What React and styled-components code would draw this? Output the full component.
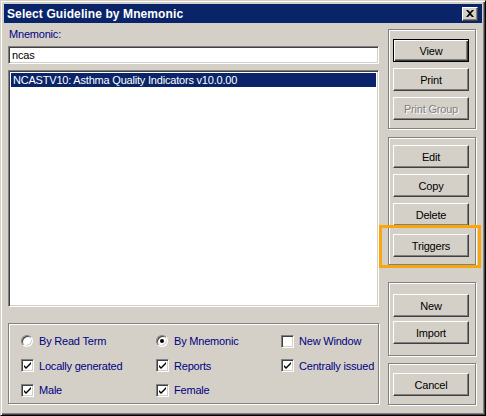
import React from 'react';
import styled, { createGlobalStyle } from 'styled-components';

// --- Data ---
const rightGroups = [
  { top: 1, height: 100, padTop: 9, gap: 6, buttons: [
    { label: 'View', isDefault: true },
    { label: 'Print' },
    { label: 'Print Group', disabled: true },
  ] },
  { top: 8, height: 128, padTop: 7, gap: 6, buttons: [
    { label: 'Edit' },
    { label: 'Copy' },
    { label: 'Delete' },
    { label: 'Triggers', extra: 2 },
  ] },
  { top: 17, height: 74, padTop: 11, gap: 4, buttons: [
    { label: 'New' },
    { label: 'Import' },
  ] },
  { top: 7, height: 42, padTop: 9, gap: 0, buttons: [
    { label: 'Cancel' },
  ] },
];

const options = [
  { type: 'radio', label: 'By Read Term', checked: false },
  { type: 'radio', label: 'By Mnemonic', checked: true },
  { type: 'check', label: 'New Window', checked: false },
  { type: 'check', label: 'Locally generated', checked: true },
  { type: 'check', label: 'Reports', checked: true },
  { type: 'check', label: 'Centrally issued', checked: true },
  { type: 'check', label: 'Male', checked: true },
  { type: 'check', label: 'Female', checked: true },
];

// --- Styled Components ---
const GlobalStyle = createGlobalStyle`
  html, body {
    margin: 0;
    padding: 0;
    background: #d4d0c8;
  }
  body {
    font-family: "Liberation Sans", Tahoma, Arial, sans-serif;
    font-size: 11px;
    letter-spacing: -0.2px;
    color: #000;
  }
`;

const Window = styled.div`
  position: relative;
  width: 486px;
  height: 416px;
  box-sizing: border-box;
  background: #d4d0c8;
  border: 1px solid;
  border-color: #d4d0c8 #000 #000 #d4d0c8;
  box-shadow: inset 1px 1px 0 #fff, inset -1px -1px 0 #404040, inset -2px -2px 0 #808080;
  padding: 3px;
  display: flex;
  flex-direction: column;
`;

const TitleBar = styled.div`
  height: 19px;
  background: #0a246a;
  display: flex;
  align-items: center;
  justify-content: space-between;
  padding: 0 4px 0 3px;
`;

const TitleText = styled.span`
  color: #fff;
  font-weight: bold;
  font-size: 12px;
  letter-spacing: 0.1px;
`;

const CloseButton = styled.div`
  width: 16px;
  height: 14px;
  box-sizing: border-box;
  background: #d4d0c8;
  border: 1px solid;
  border-color: #fff #404040 #404040 #fff;
  box-shadow: inset -1px -1px 0 #808080;
  display: flex;
  align-items: center;
  justify-content: center;
`;

const Body = styled.div`
  display: flex;
  gap: 9px;
  padding: 5px 6px 0 4px;
`;

const LeftColumn = styled.div`
  width: 371px;
  display: flex;
  flex-direction: column;
`;

const FieldLabel = styled.div`
  color: #000080;
  height: 13px;
  line-height: 13px;
  padding-left: 1px;
  margin-bottom: 5px;
`;

const sunken = `
  box-sizing: border-box;
  background: #fff;
  border: 1px solid;
  border-color: #808080 #fff #fff #808080;
  box-shadow: inset 1px 1px 0 #404040, inset -1px -1px 0 #d4d0c8;
`;

const TextInput = styled.div`
  ${sunken}
  height: 18px;
  line-height: 16px;
  padding: 0 3px;
  margin-bottom: 6px;
`;

const ListBox = styled.div`
  ${sunken}
  height: 237px;
  padding: 2px;
  margin-bottom: 16px;
`;

const ListItem = styled.div`
  height: 14px;
  line-height: 14px;
  padding-left: 2px;
  background: ${(p) => (p.selected ? '#0a246a' : 'transparent')};
  color: ${(p) => (p.selected ? '#fff' : '#000')};
`;

const GroupBox = styled.div`
  box-sizing: border-box;
  border: 1px solid #808080;
  box-shadow: inset 1px 1px 0 #fff, 1px 1px 0 #fff;
`;

const OptionsGroup = styled(GroupBox)`
  height: 81px;
  display: grid;
  grid-template-columns: 135px 125px 1fr;
  grid-auto-rows: 24.5px;
  padding: 5px 0 0 12px;
`;

const Option = styled.div`
  display: flex;
  align-items: center;
  gap: 5px;
  color: #000080;
`;

const CheckBox = styled.span`
  ${sunken}
  width: 13px;
  height: 13px;
  display: flex;
  align-items: center;
  justify-content: center;
`;

const Radio = styled.span`
  ${sunken}
  width: 12px;
  height: 12px;
  border-radius: 50%;
  display: flex;
  align-items: center;
  justify-content: center;
  margin-right: 1px;
`;

const RadioDot = styled.span`
  width: 4px;
  height: 4px;
  border-radius: 50%;
  background: #000;
`;

const RightColumn = styled.div`
  position: relative;
  width: 88px;
  display: flex;
  flex-direction: column;
`;

const ButtonGroup = styled(GroupBox)`
  margin-top: ${(p) => p.$top}px;
  height: ${(p) => p.$height}px;
  padding: ${(p) => p.$padTop}px 0 0 4px;
  display: flex;
  flex-direction: column;
  gap: ${(p) => p.$gap}px;
`;

const Button = styled.div`
  width: 76px;
  height: 23px;
  box-sizing: border-box;
  margin-top: ${(p) => p.$extra || 0}px;
  background: #d4d0c8;
  border: 1px solid;
  border-color: ${(p) => (p.$isDefault ? '#000' : '#fff #404040 #404040 #fff')};
  box-shadow: ${(p) =>
    p.$isDefault
      ? 'inset 1px 1px 0 #fff, inset -1px -1px 0 #404040, inset -2px -2px 0 #808080'
      : 'inset -1px -1px 0 #808080'};
  display: flex;
  align-items: center;
  justify-content: center;
  color: ${(p) => (p.$disabled ? '#808080' : '#000')};
  text-shadow: ${(p) => (p.$disabled ? '1px 1px 0 #fff' : 'none')};
`;

const Highlight = styled.div`
  position: absolute;
  left: -9px;
  top: 197px;
  width: 102px;
  height: 43px;
  box-sizing: border-box;
  border: 3px solid #f7a70c;
  pointer-events: none;
`;

// --- Parts ---
function CheckMark() {
  return (
    <svg width="7" height="7" viewBox="0 0 7 7">
      <path d="M0 3 L2 5 L7 0 V2 L2 7 L0 5 Z" fill="#000" />
    </svg>
  );
}

function OptionItem({ type, label, checked }) {
  return (
    <Option>
      {type === 'radio' ? (
        <Radio>{checked && <RadioDot />}</Radio>
      ) : (
        <CheckBox>{checked && <CheckMark />}</CheckBox>
      )}
      <span>{label}</span>
    </Option>
  );
}

// --- Component ---
export default function App() {
  return (
    <>
      <GlobalStyle />
      <Window>
        <TitleBar>
          <TitleText>Select Guideline by Mnemonic</TitleText>
          <CloseButton>
            <svg width="8" height="7" viewBox="0 0 8 7">
              <path d="M0 0 H2 L4 2 L6 0 H8 L5 3.5 L8 7 H6 L4 5 L2 7 H0 L3 3.5 Z" fill="#000" />
            </svg>
          </CloseButton>
        </TitleBar>
        <Body>
          <LeftColumn>
            <FieldLabel>Mnemonic:</FieldLabel>
            <TextInput>ncas</TextInput>
            <ListBox>
              <ListItem selected>NCASTV10: Asthma Quality Indicators v10.0.00</ListItem>
            </ListBox>
            <OptionsGroup>
              {options.map((o) => (
                <OptionItem key={o.label} {...o} />
              ))}
            </OptionsGroup>
          </LeftColumn>
          <RightColumn>
            {rightGroups.map((g, i) => (
              <ButtonGroup key={i} $top={g.top} $height={g.height} $padTop={g.padTop} $gap={g.gap}>
                {g.buttons.map((b) => (
                  <Button key={b.label} $isDefault={b.isDefault} $disabled={b.disabled} $extra={b.extra}>
                    {b.label}
                  </Button>
                ))}
              </ButtonGroup>
            ))}
            <Highlight />
          </RightColumn>
        </Body>
      </Window>
    </>
  );
}
